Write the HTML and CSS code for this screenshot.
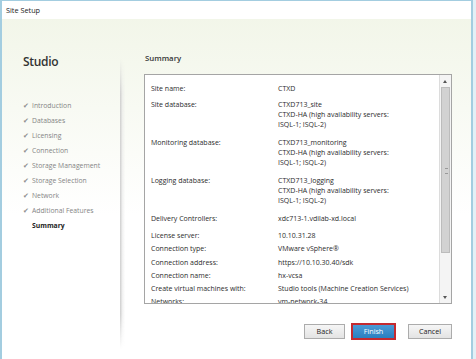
FILE: index.html
```html
<!DOCTYPE html>
<html lang="en">
<head>
  <meta charset="UTF-8">
  <meta name="viewport" content="width=device-width, initial-scale=1.0">
  <title>Site Setup</title>
  <link rel="stylesheet" href="styles.css">
</head>
<body>
  <div class="window">
    <div class="titlebar">Site Setup</div>

    <div class="main">
      <!-- 左侧步骤 -->
      <aside class="steps">
        <h1 class="brand">Studio</h1>
        <ul class="nav">
          <li class="done">Introduction</li>
          <li class="done">Databases</li>
          <li class="done">Licensing</li>
          <li class="done">Connection</li>
          <li class="done">Storage Management</li>
          <li class="done">Storage Selection</li>
          <li class="done">Network</li>
          <li class="done">Additional Features</li>
          <li class="current">Summary</li>
        </ul>
      </aside>

      <div class="divider"></div>

      <!-- 右侧摘要 -->
      <section class="page">
        <h2 class="page-title">Summary</h2>

        <div class="summary">
          <div class="list">
            <div class="row first">
              <span class="label">Site name:</span>
              <span class="value">CTXD</span>
            </div>
            <div class="row">
              <span class="label">Site database:</span>
              <span class="value">CTXD713_site<br>CTXD-HA (high availability servers:<br>ISQL-1; ISQL-2)</span>
            </div>
            <div class="row">
              <span class="label">Monitoring database:</span>
              <span class="value">CTXD713_monitoring<br>CTXD-HA (high availability servers:<br>ISQL-1; ISQL-2)</span>
            </div>
            <div class="row">
              <span class="label">Logging database:</span>
              <span class="value">CTXD713_logging<br>CTXD-HA (high availability servers:<br>ISQL-1; ISQL-2)</span>
            </div>
            <div class="row">
              <span class="label">Delivery Controllers:</span>
              <span class="value">xdc713-1.vdilab-xd.local</span>
            </div>
            <div class="row tight">
              <span class="label">License server:</span>
              <span class="value">10.10.31.28</span>
            </div>
            <div class="row tight">
              <span class="label">Connection type:</span>
              <span class="value">VMware vSphere®</span>
            </div>
            <div class="row tight">
              <span class="label">Connection address:</span>
              <span class="value">https://10.10.30.40/sdk</span>
            </div>
            <div class="row tight">
              <span class="label">Connection name:</span>
              <span class="value">hx-vcsa</span>
            </div>
            <div class="row tight">
              <span class="label">Create virtual machines with:</span>
              <span class="value">Studio tools (Machine Creation Services)</span>
            </div>
            <div class="row tight">
              <span class="label">Networks:</span>
              <span class="value">vm-network-34</span>
            </div>
          </div>

          <div class="scrollbar">
            <div class="arrow up"></div>
            <div class="track">
              <div class="thumb"></div>
            </div>
            <div class="arrow down"></div>
          </div>
        </div>

        <div class="buttons">
          <div class="btn">Back</div>
          <div class="btn primary">Finish</div>
          <div class="btn cancel">Cancel</div>
        </div>
      </section>
    </div>
  </div>
</body>
</html>
```

FILE: styles.css
```css
* {
  padding: 0;
  margin: 0;
  list-style: none;
  box-sizing: border-box;
}

body {
  height: 100vh;
  overflow: hidden;
  background-color: #e3f0f6;
  font-family: "Open Sans", "Noto Sans", sans-serif;
  color: #333;
}

.window {
  height: 100%;
  margin-right: 3px;
  border: 2px solid #a3cde0;
  border-top-width: 1px;
  border-bottom: none;
  background: linear-gradient(#f1f5e7, #f8faf3 30%, #fff 60%);
}

.titlebar {
  height: 18px;
  padding-left: 4px;
  font-size: 7.3px;
  line-height: 18px;
  color: #222;
  background-color: #fff;
}

.main {
  display: flex;
  height: 340px;
}

/* 左侧步骤 */
.steps {
  width: 118px;
  padding: 35px 0 0 21px;
}

.brand {
  font-size: 12px;
  font-weight: 600;
  line-height: 16px;
  color: #333;
  letter-spacing: -0.3px;
}

.nav {
  margin-top: 28px;
}

.nav li {
  position: relative;
  height: 15px;
  font-size: 6.8px;
  line-height: 15px;
  color: #858585;
  padding-left: 9px;
}

.nav .done::before {
  content: "✔";
  position: absolute;
  left: 0;
  font-size: 6.5px;
  color: #8f8f8f;
}

.nav .current {
  font-weight: 700;
  color: #222;
}

/* 当前步骤的小三角 */
.nav .current::after {
  content: "";
  position: absolute;
  right: -3px;
  top: 4px;
  border: 4px solid transparent;
  border-right-color: #fff;
}

.divider {
  width: 5px;
  margin: 40px 0 10px;
  background:
    linear-gradient(to right, #cecece, rgba(228, 228, 228, 0.5) 50%, rgba(255, 255, 255, 0));
  -webkit-mask-image: linear-gradient(transparent, #000 12%, #000 88%, transparent);
}

/* 右侧摘要 */
.page {
  flex: 1;
  padding: 33px 19px 0 19px;
}

.page-title {
  font-size: 7.8px;
  font-weight: 600;
  line-height: 12px;
  color: #333;
  padding-left: 1px;
  margin-bottom: 10px;
}

.summary {
  display: flex;
  height: 230px;
  border: 1px solid #a5a5a5;
  background-color: #fff;
  overflow: hidden;
}

.list {
  flex: 1;
  padding: 9px 0 0 6px;
  font-size: 7px;
  color: #2c2c2c;
}

.row {
  display: flex;
  line-height: 10px;
  margin-bottom: 8px;
}

.row.first {
  margin-bottom: 6px;
}

.row.tight {
  line-height: 13.3px;
  margin-bottom: 0;
}

.row:nth-child(5) {
  margin-bottom: 5px;
}

.label {
  width: 127px;
  flex-shrink: 0;
}

.value {
  white-space: nowrap;
}

.scrollbar {
  display: flex;
  flex-direction: column;
  width: 12px;
  border-left: 1px solid #dcdcdc;
  background-color: #f4f4f4;
}

.arrow {
  position: relative;
  height: 12px;
}

.arrow::after {
  content: "";
  position: absolute;
  left: 3px;
  border: 2.5px solid transparent;
}

.arrow.up::after {
  top: 3px;
  border-bottom: 3px solid #555;
}

.arrow.down::after {
  top: 5px;
  border-top: 3px solid #555;
}

.track {
  flex: 1;
}

.thumb {
  height: 166px;
  margin: 0 1px;
  background-color: #d2d2d2;
  border: 1px solid #bcbcbc;
  position: relative;
}

.thumb::after {
  content: "";
  position: absolute;
  left: 3px;
  top: 80px;
  width: 3px;
  height: 4px;
  border-top: 1px solid #999;
  border-bottom: 1px solid #999;
}

/* 底部按钮 */
.buttons {
  display: flex;
  justify-content: flex-end;
  align-items: center;
  margin-top: 19px;
}

.btn {
  width: 41px;
  height: 15px;
  margin-right: 6px;
  font-size: 7.2px;
  line-height: 13px;
  text-align: center;
  color: #222;
  border: 1px solid #acacac;
  background: linear-gradient(#f6f6f6, #e3e3e3);
}

.btn.primary {
  width: 45px;
  height: 17px;
  margin-right: 12px;
  line-height: 13px;
  color: #fff;
  border: 2px solid #c42a30;
  background: linear-gradient(#4a9ad6, #2a7fc0);
}

.btn.cancel {
  width: 44px;
  margin-right: 0;
}
```
